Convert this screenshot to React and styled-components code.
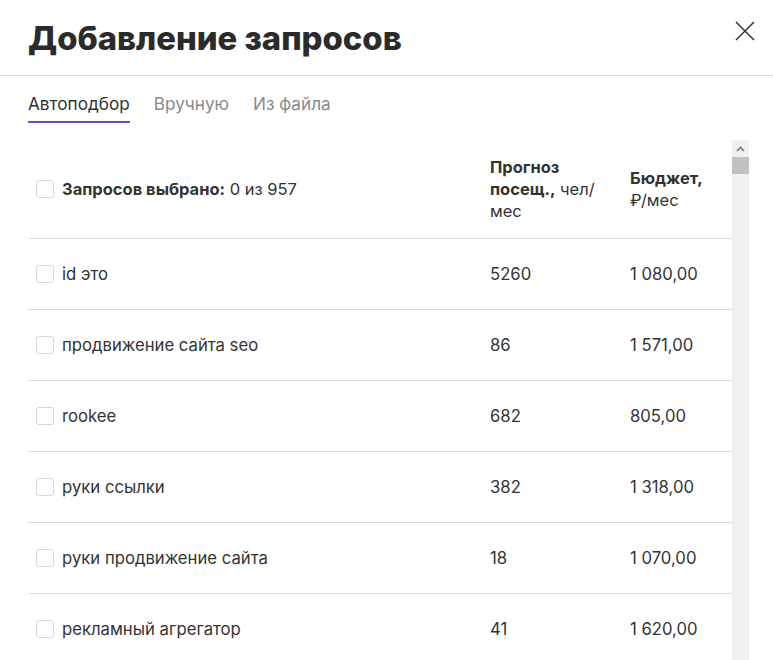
import React from 'react';
import styled, { createGlobalStyle } from 'styled-components';

const GlobalStyle = createGlobalStyle`
  html, body {
    margin: 0;
    padding: 0;
    background: #fff;
    height: 100%;
    overflow: hidden;
  }
  body {
    font-family: Inter, "Noto Sans", sans-serif;
    color: #333;
  }
`;

const Modal = styled.div`
  width: 773px;
  height: 660px;
  display: flex;
  flex-direction: column;
  overflow: hidden;
`;

const Header = styled.header`
  flex: none;
  height: 76px;
  box-sizing: border-box;
  border-bottom: 1px solid #dcdcdc;
  display: flex;
  align-items: center;
  justify-content: space-between;
  padding: 0 18px 0 28px;
`;

const Title = styled.h1`
  margin: 0;
  font-size: 32.8px;
  font-weight: 800;
  color: #2b2b2b;
`;

const CloseButton = styled.button`
  border: 0;
  background: none;
  padding: 0;
  width: 20px;
  height: 20px;
  cursor: pointer;
  margin-bottom: 14px;
  svg {
    display: block;
  }
`;

const Tabs = styled.nav`
  flex: none;
  display: flex;
  gap: 24px;
  padding: 18px 28px 0;
  height: 64px;
  box-sizing: border-box;
`;

const Tab = styled.div`
  font-size: 17.2px;
  line-height: 20px;
  height: 29px;
  box-sizing: border-box;
  color: ${(p) => (p.$active ? '#333' : '#8a8a8a')};
  border-bottom: 2px solid ${(p) => (p.$active ? '#5b4ed3' : 'transparent')};
  cursor: pointer;
`;

const ListArea = styled.div`
  flex: none;
  display: flex;
  margin-left: 28px;
  width: 721px;
  height: 600px;
`;

const Scroller = styled.div`
  flex: 1;
  min-width: 0;
  overflow: hidden;
`;

const ScrollTrack = styled.div`
  flex: none;
  width: 17px;
  background: #f1f1f1;
  display: flex;
  flex-direction: column;
`;

const ScrollArrow = styled.div`
  height: 17px;
  display: flex;
  align-items: center;
  justify-content: center;
`;

const ScrollThumb = styled.div`
  height: 17px;
  background: #c1c1c1;
`;

const Table = styled.table`
  width: 100%;
  border-collapse: collapse;
  table-layout: fixed;
`;

const HeadCell = styled.th`
  text-align: left;
  vertical-align: middle;
  font-size: 16.5px;
  line-height: 22px;
  font-weight: 400;
  height: 98px;
  padding: 0 8px 0 ${(p) => p.$pad || 0}px;
  box-sizing: border-box;
  border-bottom: 1px solid #dcdcdc;
  color: #333;
  b {
    font-weight: 700;
  }
`;

const NoWrap = styled.span`
  white-space: nowrap;
`;

const Cell = styled.td`
  font-size: 16.7px;
  height: 70px;
  padding: 0 0 0 ${(p) => p.$pad || 0}px;
  border-bottom: 1px solid #dcdcdc;
  color: #333;
`;

const CheckLabel = styled.label`
  display: flex;
  align-items: center;
  gap: 8px;
`;

const Check = styled.span`
  width: 18px;
  height: 18px;
  box-sizing: border-box;
  border: 1px solid #d9d9d9;
  border-radius: 3px;
  flex: none;
  background: #fff;
`;

const rows = [
  ['id это', '5260', '1 080,00'],
  ['продвижение сайта seo', '86', '1 571,00'],
  ['rookee', '682', '805,00'],
  ['руки ссылки', '382', '1 318,00'],
  ['руки продвижение сайта', '18', '1 070,00'],
  ['рекламный агрегатор', '41', '1 620,00'],
];

const CloseIcon = () => (
  <svg width="20" height="20" viewBox="0 0 20 20" fill="none" stroke="#333" strokeWidth="1.5">
    <path d="M1 1L19 19M19 1L1 19" />
  </svg>
);

const ArrowUp = () => (
  <svg width="9" height="6" viewBox="0 0 9 6" fill="none" stroke="#777" strokeWidth="1.6">
    <path d="M1 5L4.5 1.5L8 5" />
  </svg>
);

export default function App() {
  return (
    <>
      <GlobalStyle />
      <Modal>
        <Header>
          <Title>Добавление запросов</Title>
          <CloseButton aria-label="Закрыть">
            <CloseIcon />
          </CloseButton>
        </Header>
        <Tabs>
          <Tab $active>Автоподбор</Tab>
          <Tab>Вручную</Tab>
          <Tab>Из файла</Tab>
        </Tabs>
        <ListArea>
          <Scroller>
            <Table>
              <colgroup>
                <col style={{ width: 462 }} />
                <col style={{ width: 140 }} />
                <col />
              </colgroup>
              <thead>
                <tr>
                  <HeadCell $pad={8}>
                    <CheckLabel>
                      <Check />
                      <span>
                        <b>Запросов выбрано:</b> 0 из 957
                      </span>
                    </CheckLabel>
                  </HeadCell>
                  <HeadCell>
                    <b>Прогноз посещ.,</b> чел/ мес
                  </HeadCell>
                  <HeadCell>
                    <b>Бюджет,</b> <NoWrap>₽/мес</NoWrap>
                  </HeadCell>
                </tr>
              </thead>
              <tbody>
                {rows.map(([q, v, b], i) => (
                  <tr key={i}>
                    <Cell $pad={8}>
                      <CheckLabel>
                        <Check />
                        <span>{q}</span>
                      </CheckLabel>
                    </Cell>
                    <Cell>{v}</Cell>
                    <Cell>{b}</Cell>
                  </tr>
                ))}
              </tbody>
            </Table>
          </Scroller>
          <ScrollTrack>
            <ScrollArrow>
              <ArrowUp />
            </ScrollArrow>
            <ScrollThumb />
          </ScrollTrack>
        </ListArea>
      </Modal>
    </>
  );
}
